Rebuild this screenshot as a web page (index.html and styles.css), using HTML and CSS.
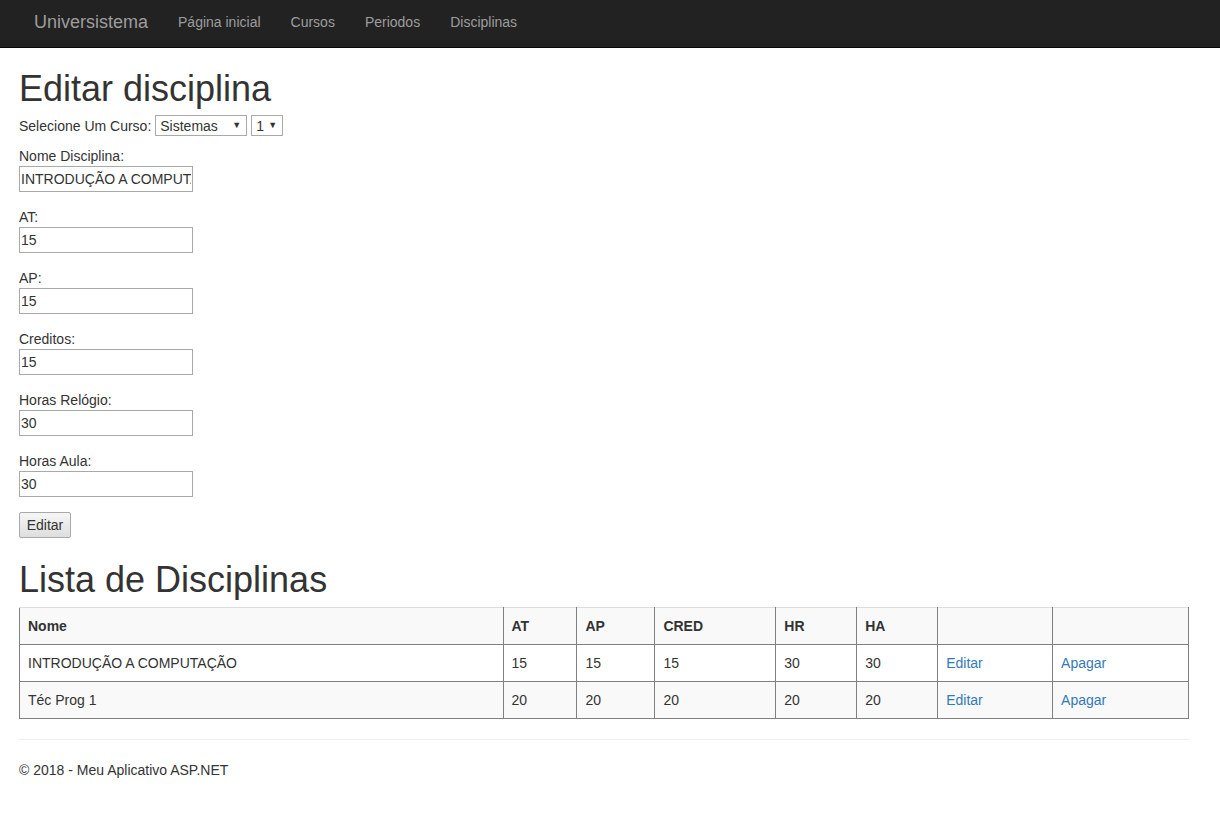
FILE: index.html
```html
<!DOCTYPE html>
<html lang="pt-br">
<head>
<meta charset="utf-8">
<title>Editar disciplina - Universistema</title>
<link rel="stylesheet" href="styles.css">
</head>
<body>
<nav class="navbar">
  <a class="brand" href="#">Universistema</a>
  <ul class="nav">
    <li><a href="#">Página inicial</a></li>
    <li><a href="#">Cursos</a></li>
    <li><a href="#">Periodos</a></li>
    <li><a href="#">Disciplinas</a></li>
  </ul>
</nav>
<main class="content">
  <h2 class="title">Editar disciplina</h2>
  <div class="curso-row">
    <span>Selecione Um Curso:</span>
    <span class="select-wrap w-curso"><select class="sel"><option>Sistemas</option></select></span>
    <span class="select-wrap w-periodo"><select class="sel"><option>1</option></select></span>
  </div>
  <form class="form">
    <div class="group"><label>Nome Disciplina:</label><input class="field" type="text" value="INTRODUÇÃO A COMPUTAÇÃO"></div>
    <div class="group"><label>AT:</label><input class="field" type="text" value="15"></div>
    <div class="group"><label>AP:</label><input class="field" type="text" value="15"></div>
    <div class="group"><label>Creditos:</label><input class="field" type="text" value="15"></div>
    <div class="group"><label>Horas Relógio:</label><input class="field" type="text" value="30"></div>
    <div class="group"><label>Horas Aula:</label><input class="field" type="text" value="30"></div>
    <div class="group"><button class="btn" type="button">Editar</button></div>
  </form>
  <h2 class="title list-title">Lista de Disciplinas</h2>
  <table class="table">
    <tr class="head">
      <th class="c-nome">Nome</th><th class="c-at">AT</th><th class="c-ap">AP</th><th class="c-cred">CRED</th><th class="c-hr">HR</th><th class="c-ha">HA</th><th class="c-ed"></th><th class="c-ap2"></th>
    </tr>
    <tr>
      <td>INTRODUÇÃO A COMPUTAÇÃO</td><td>15</td><td>15</td><td>15</td><td>30</td><td>30</td><td><a href="#">Editar</a></td><td><a href="#">Apagar</a></td>
    </tr>
    <tr class="odd">
      <td>Téc Prog 1</td><td>20</td><td>20</td><td>20</td><td>20</td><td>20</td><td><a href="#">Editar</a></td><td><a href="#">Apagar</a></td>
    </tr>
  </table>
  <hr class="sep">
  <footer class="footer"><p>© 2018 - Meu Aplicativo ASP.NET</p></footer>
</main>
</body>
</html>
```
FILE: styles.css
```css
* { box-sizing: border-box; }
html, body { margin: 0; padding: 0; }
body {
  font-family: "Liberation Sans", Arial, sans-serif;
  font-size: 14px;
  line-height: 20px;
  color: #333;
  background: #fff;
}
a { color: #337ab7; text-decoration: none; }

.navbar {
  height: 48px;
  background: #222;
  border-bottom: 1px solid #080808;
  display: flex;
  align-items: center;
  padding-left: 19px;
  padding-bottom: 4px;
}
.brand {
  font-size: 18px;
  line-height: 20px;
  color: #9d9d9d;
  padding: 0 15px;
}
.nav {
  list-style: none;
  margin: 0;
  padding: 0;
  display: flex;
}
.nav a {
  display: block;
  padding: 0 15px;
  color: #9d9d9d;
  font-size: 14px;
  line-height: 20px;
}

.content {
  padding: 0 19px;
  width: 1208px;
}
.title {
  font-family: "Liberation Sans", Arial, sans-serif;
  font-weight: 500;
  font-size: 36px;
  line-height: 40px;
  margin: 21px 0 5px;
  color: #333;
}
.curso-row {
  display: flex;
  align-items: center;
  gap: 4px;
  height: 23px;
  margin-bottom: 9px;
}
.select-wrap {
  position: relative;
  display: inline-block;
  height: 21px;
}
.select-wrap::after {
  content: "\25BC";
  position: absolute;
  right: 6px;
  top: 5px;
  font-size: 9px;
  line-height: 10px;
  color: #333;
  pointer-events: none;
}
.sel {
  appearance: none;
  -webkit-appearance: none;
  height: 21px;
  width: 100%;
  border: 1px solid #a9a9a9;
  border-radius: 0;
  background: #fff;
  font-family: "Liberation Sans", Arial, sans-serif;
  font-size: 14px;
  color: #333;
  padding: 0 0 0 4px;
  margin: 0;
}
.w-curso { width: 92px; }
.w-periodo { width: 32px; }

.form {
  display: flex;
  flex-direction: column;
  gap: 15px;
  margin: 0;
}
.group {
  display: flex;
  flex-direction: column;
  align-items: flex-start;
}
.group label { line-height: 20px; }
.field {
  width: 174px;
  height: 26px;
  border: 1px solid #a9a9a9;
  padding: 1px 1px;
  font-family: "Liberation Sans", Arial, sans-serif;
  font-size: 14px;
  color: #333;
  margin: 0;
}
.btn {
  width: 52px;
  height: 26px;
  font-family: "Liberation Sans", Arial, sans-serif;
  font-size: 14px;
  color: #333;
  border: 1px solid #a9a9a9;
  border-radius: 2px;
  background: linear-gradient(#f6f6f6, #dedede);
  padding: 0;
  margin: 0;
}

.list-title { margin-top: 22px; margin-bottom: 7px; }

.table {
  width: 1170px;
  border-collapse: collapse;
  margin-bottom: 20px;
}
.table th, .table td {
  border: 1px solid #808080;
  padding: 8px 8px;
  line-height: 20px;
  text-align: left;
  vertical-align: top;
  height: 37px;
}
.table th { font-weight: bold; border-top-color: #ddd; }
.table .head { background: #f9f9f9; }
.table .odd { background: #f9f9f9; }
.c-nome { width: 484px; }
.c-at { width: 74px; }
.c-ap { width: 78px; }
.c-cred { width: 121px; }
.c-hr { width: 81px; }
.c-ha { width: 81px; }
.c-ed { width: 115px; }
.c-ap2 { width: 136px; }

.sep {
  border: 0;
  border-top: 1px solid #eee;
  margin: 0 0 20px;
  width: 1170px;
}
.footer p { margin: 0 0 10px; }
```
